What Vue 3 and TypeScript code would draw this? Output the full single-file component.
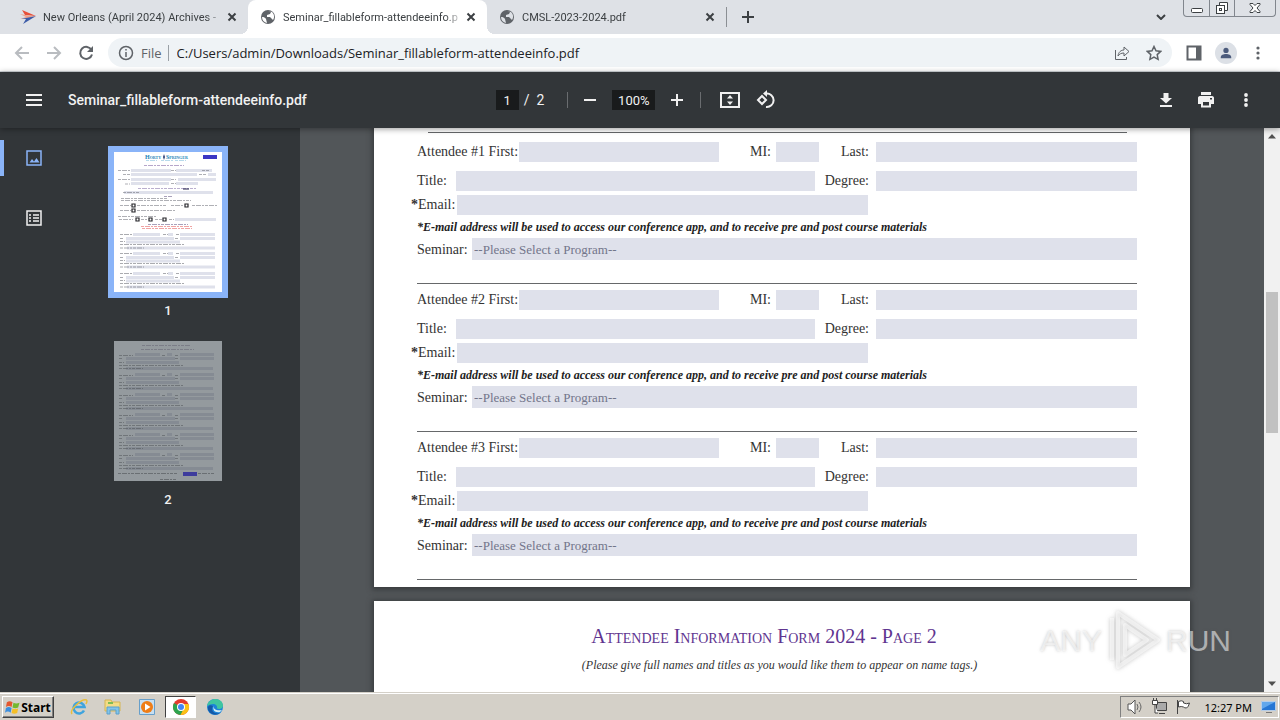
<script setup lang="ts">
import { ref } from 'vue'

interface Attendee {
  id: number
  first: string
  mi: string
  last: string
  title: string
  degree: string
  email: string
}

const attendees = ref<Attendee[]>(
  [1, 2, 3].map((id) => ({ id, first: '', mi: '', last: '', title: '', degree: '', email: '' })),
)

const pageNumber = ref('1')
const zoom = ref('100%')
const address = ref('C:/Users/admin/Downloads/Seminar_fillableform-attendeeinfo.pdf')

const firstThumbBlocks = [82, 101, 121]
const secondThumbBlocks = [12, 32, 52, 72, 92, 112]
</script>

<template>
  <div class="screen">
    <header class="tabs">
      <div class="tab tab-first">
        <svg class="fav" viewBox="0 0 16 16"><path d="M2 1l14 6-11-1z" fill="#e8503a" /><path d="M0 5l16 3-16 2 6-2z" fill="#f0a08a" /><path d="M1 10l15-3-13 8 3-5z" fill="#3c5ca8" /></svg>
        <span class="tab-name">New Orleans (April 2024) Archives -</span>
        <button class="x" aria-label="Close tab"><svg viewBox="0 0 10 10"><path d="M1.500 1.500l7 7M8.500 1.500l-7 7" /></svg></button>
      </div>
      <div class="tab active">
        <svg class="fav" viewBox="0 0 16 16"><circle cx="8" cy="8" r="7" fill="#5f6368" /><path d="M2 8c2 0 3 .5 4 2l1 4C4 13.500 2 11 2 8zM8 2l3 1-1 2-3 1v2h3l2 2 1 1c2-3 1-6-1-8" fill="#fff" /></svg>
        <span class="tab-name">Seminar_fillableform-attendeeinfo.p</span>
        <button class="x" aria-label="Close tab"><svg viewBox="0 0 10 10"><path d="M1.500 1.500l7 7M8.500 1.500l-7 7" /></svg></button>
      </div>
      <div class="tab">
        <svg class="fav" viewBox="0 0 16 16"><circle cx="8" cy="8" r="7" fill="#5f6368" /><path d="M2 8c2 0 3 .5 4 2l1 4C4 13.500 2 11 2 8zM8 2l3 1-1 2-3 1v2h3l2 2 1 1c2-3 1-6-1-8" fill="#dee1e6" /></svg>
        <span class="tab-name">CMSL-2023-2024.pdf</span>
        <button class="x" aria-label="Close tab"><svg viewBox="0 0 10 10"><path d="M1.500 1.500l7 7M8.500 1.500l-7 7" /></svg></button>
      </div>
      <i class="tab-sep"></i>
      <button class="new-tab" aria-label="New tab"><svg viewBox="0 0 12 12"><path d="M6 0v12M0 6h12" /></svg></button>
      <button class="tab-search" aria-label="Search tabs"><svg viewBox="0 0 10 6"><path d="M1 1l4 4 4-4" /></svg></button>
      <div class="win">
        <button aria-label="Minimize"><svg viewBox="0 0 24 16"><rect x="6.500" y="8.500" width="11" height="4" rx="1" /></svg></button>
        <button aria-label="Restore"><svg viewBox="0 0 24 16"><path d="M9.500 5V2.500h8v8H15" /><rect x="6.500" y="5.500" width="8" height="8" /><rect x="9.500" y="8.500" width="2" height="2" /></svg></button>
        <button class="wide" aria-label="Close window"><svg viewBox="0 0 24 16"><path d="M7 3.500h3l2 2 2-2h3v1l-3 3.500 3 3.500v1h-3l-2-2-2 2H7v-1L10 8 7 4.500z" /></svg></button>
      </div>
    </header>

    <nav class="toolbar">
      <button class="nav dim" aria-label="Back"><svg viewBox="0 0 16 16"><path d="M15 8H2M8 2L2 8l6 6" /></svg></button>
      <button class="nav dim" aria-label="Forward"><svg viewBox="0 0 16 16"><path d="M1 8h13M8 2l6 6-6 6" /></svg></button>
      <button class="nav" aria-label="Reload"><svg viewBox="0 0 16 16"><path d="M13.500 5A6 6 0 1 0 14 9.500" /><path d="M15 1v6H9z" class="solid" /></svg></button>
      <div class="omnibox">
        <svg class="info" viewBox="0 0 16 16"><circle cx="8" cy="8" r="6.500" /><path d="M8 7v5M8 4v1.500" /></svg>
        <label for="url">File</label>
        <i class="omni-sep"></i>
        <input id="url" v-model="address" type="text" />
        <button aria-label="Share"><svg viewBox="0 0 16 16"><path d="M1.500 5v9.500h11V12M4 11c.5-4 3-6 6-6V2l5 4.500-5 4.500V8c-3 0-4.500 1-6 3z" class="thin" /></svg></button>
        <button aria-label="Bookmark"><svg viewBox="0 0 16 16"><path d="M8 1.500l2 4.300 4.700.6-3.500 3.200.9 4.700L8 12l-4.100 2.300.9-4.700L1.300 6.400 6 5.800z" /></svg></button>
      </div>
      <button class="side-panel" aria-label="Side panel"><svg viewBox="0 0 16 16"><path d="M1.500 1.500h13v13h-13z" /><path d="M10 1h5v14h-5z" class="solid" /></svg></button>
      <button class="avatar" aria-label="Profile"><svg viewBox="0 0 16 16"><circle cx="8" cy="5" r="3" class="solid" /><path d="M2 14v-1c0-3 3-4 6-4s6 1 6 4v1z" class="solid" /></svg></button>
      <button class="nav more" aria-label="Menu"><svg viewBox="0 0 16 16"><g class="solid"><circle cx="8" cy="3" r="1.600" /><circle cx="8" cy="8" r="1.600" /><circle cx="8" cy="13" r="1.600" /></g></svg></button>
    </nav>

    <section class="pdf-bar">
      <div class="pdf-left">
        <button aria-label="Toggle sidebar"><svg viewBox="0 0 16 16"><path d="M0 3h16M0 8h16M0 13h16" /></svg></button>
        <h1>Seminar_fillableform-attendeeinfo.pdf</h1>
      </div>
      <div class="pdf-mid">
        <input v-model="pageNumber" class="page-no" aria-label="Page number" />
        <span class="slash">/</span><span>2</span>
        <i class="bar-sep sep-a"></i>
        <button aria-label="Zoom out"><svg viewBox="0 0 16 16"><path d="M2 8h12" /></svg></button>
        <input v-model="zoom" class="zoom" aria-label="Zoom level" />
        <button aria-label="Zoom in" class="zoom-in"><svg viewBox="0 0 16 16"><path d="M2 8h12M8 2v12" /></svg></button>
        <i class="bar-sep sep-b"></i>
        <button aria-label="Fit to page"><svg class="big" viewBox="0 0 20 20"><path d="M1 3h18v14H1z" /><path d="M10 5l3 3.500H7zM10 15l3-3.500H7z" class="solid" /></svg></button>
        <button aria-label="Rotate"><svg class="big" viewBox="0 0 20 20"><path d="M6 6l4 4-4 4-4-4z" /><path d="M10 3.500a6.800 6.800 0 1 1 0 13.500" /><path d="M11 0v7L7 3.500z" class="solid" /></svg></button>
      </div>
      <div class="pdf-right">
        <button aria-label="Download"><svg viewBox="0 0 16 16"><path d="M5.500 1h5v5H14L8 11.500 2 6h3.500zM2 13h12v2H2z" class="solid" /></svg></button>
        <button aria-label="Print"><svg viewBox="0 0 16 16"><path d="M3 0h10v3H3zM2 4h12c1.500 0 2 1 2 2v6h-3v3.500H3V12H0V6c0-1 .5-2 2-2zm3 6v3.500h6V10zM12 6v1.500h2V6z" fill-rule="evenodd" class="solid" /></svg></button>
        <button aria-label="More actions"><svg viewBox="0 0 16 16"><g class="solid"><circle cx="8" cy="3" r="1.900" /><circle cx="8" cy="8" r="1.900" /><circle cx="8" cy="13" r="1.900" /></g></svg></button>
      </div>
    </section>

    <main class="viewer">
      <aside class="side">
        <div class="modes">
          <button class="on" aria-label="Thumbnails"><svg viewBox="0 0 16 16"><path d="M1 1h14v14H1z" /><path d="M3.500 12.500L6 9l2 2.500L10.500 8l3 4.500z" class="solid" /></svg></button>
          <button aria-label="Outline"><svg viewBox="0 0 16 16"><path d="M1 1h14v14H1zM3 5h2M7 5h6M3 8h2M7 8h6M3 11h2M7 11h6" /></svg></button>
        </div>
        <div class="thumbs">
          <button class="thumb selected" aria-label="Page 1">
            <svg viewBox="0 0 108 140">
              <path d="M0 0h108v140H0z" fill="#fff" />
              <text x="31" y="7" class="brand" fill="#2286b8">Horty</text>
              <path d="M50 2l1 3-1 3-1-3z" fill="#2d3f77" />
              <text x="52" y="7" class="brand" fill="#2286b8">Springer</text>
              <path d="M32 8.500h11M47 8.500h12M61 8.500h11" class="ln" stroke="#6fb6d8" />
              <path d="M89 3h14v4H89z" fill="#3b36c4" />
              <path d="M30 13.500h40" class="ln" stroke="#6e4d96" />
              <g fill="#dfe1eb"><path d="M17 17h40v3H17zM62 17h36v3H62zM17 21h66v3H17zM94 21h8v3h-8zM17 26h40v3H17zM64 26h38v3H64zM17 30h38v3H17zM62 30h22v3H62zM10 39h89v3H10zM61 66h41v3H61z" /></g>
              <path d="M4 18.500h12M57 18.500h5M88 18.500h7M9 22.500h7M85 22.500h7M4 27.500h12M57 27.500h5M11 32h5M57 31.500h5M9 40.500h17M7 46.500h46M7 48.500h70M6 53.500h11M23 53.500h30M57 53.500h13M78 53.500h26M6 58.500h11M23 58.500h39M4 64.500h39M5 67.500h14M27 67.500h6M41 67.500h7M55 67.500h5" class="ln" stroke="#60626b" />
              <path d="M24 36.500h58" class="ln" stroke="#755fa0" /><path d="M69 37h6" stroke="#22204a" /><path d="M50 44.500h8M34 72.500h40" class="ln" stroke="#544478" />
              <path d="M27 74.500h52M28 76.500h50" class="ln" stroke="#e24a4a" />
              <g fill="none" stroke="#26262b" stroke-width="1.200"><path d="M18 52h3v3h-3zM71 52h3v3h-3zM18 57h3v3h-3zM22 66h3v3h-3zM35 66h3v3h-3zM49 66h3v3h-3z" /></g>
              <g v-for="y in firstThumbBlocks" :key="y" :transform="`translate(0 ${y})`">
                <path d="M19 -1h27v3H19zM54 -1h5v3h-5zM66 -1h35v3H66zM12 3h48v3H12zM66 3h35v3H66zM12 6.500h54v3H12zM13 12.500h88v3H13z" fill="#dfe1eb" />
                <path d="M6 .5h12M49 .5h5M62 .5h3M6 4.500h4M61 4.500h4M6 7.500h5M6 10.500h65M6 14h24" class="ln" stroke="#55575f" />
              </g>
            </svg>
          </button>
          <span class="thumb-no">1</span>
          <button class="thumb" aria-label="Page 2">
            <svg viewBox="0 0 108 140">
              <path d="M0 0h108v140H0z" fill="#949a9e" />
              <path d="M28 4.500h48M27 8.500h53" class="ln" stroke="#62606f" />
              <g v-for="y in secondThumbBlocks" :key="y" :transform="`translate(0 ${y})`">
                <path d="M21 0h25v3H21zM53 0h5v3h-5zM66 0h34v3H66zM12 4h49v3H12zM66 4h34v3H66zM12 8h53v3H12zM12 14h87v3H12z" fill="#858b93" />
                <path d="M5 2.500h14M48 2.500h4M61 2.500h3M5 5.500h4M61 5.500h4M5 9.500h5M5 12.500h65M5 15.500h24" class="ln" stroke="#4c5054" />
              </g>
              <path d="M4 132.500h59M84 132.500h17M46 138.500h16" class="ln" stroke="#404448" /><path d="M69 131h14v4H69z" fill="#3e3c9d" />
            </svg>
          </button>
          <span class="thumb-no">2</span>
        </div>
      </aside>

      <div class="canvas">
        <article class="sheet sheet-one">
          <hr class="top-rule" />
          <form v-for="a in attendees" :key="a.id" class="attendee">
            <div class="row names">
              <label :for="`first${a.id}`">Attendee #{{ a.id }} First:</label><input :id="`first${a.id}`" v-model="a.first" />
              <label class="right" :for="`mi${a.id}`">MI:</label><input :id="`mi${a.id}`" v-model="a.mi" />
              <label class="right wide-gap" :for="`last${a.id}`">Last:</label><input :id="`last${a.id}`" v-model="a.last" />
            </div>
            <div class="row titles">
              <label :for="`title${a.id}`">Title:</label><input :id="`title${a.id}`" v-model="a.title" />
              <label class="right wide-gap" :for="`degree${a.id}`">Degree:</label><input :id="`degree${a.id}`" v-model="a.degree" />
            </div>
            <div class="row emails">
              <label :for="`email${a.id}`"><b>*</b>Email:</label><input :id="`email${a.id}`" v-model="a.email" />
            </div>
            <p class="note">*E-mail address will be used to access our conference app, and to receive pre and post course materials</p>
            <div class="row seminars">
              <label :for="`seminar${a.id}`">Seminar:</label>
              <select :id="`seminar${a.id}`"><option>--Please Select a Program--</option></select>
            </div>
            <hr />
          </form>
        </article>
        <article class="sheet sheet-two">
          <h2>Attendee Information Form 2024 - Page 2</h2>
          <p>(Please give full names and titles as you would like them to appear on name tags.)</p>
        </article>
      </div>

      <div class="scroll">
        <svg viewBox="0 0 16 16"><path d="M4 10.500l4-4.500 4 4.500z" /></svg>
        <i class="before"></i><i class="grip"></i><i class="after"></i>
        <svg viewBox="0 0 16 16"><path d="M4 5.500L8 10l4-4.500z" /></svg>
      </div>

      <div class="mark">
        <span>ANY</span>
        <svg viewBox="0 0 60 66"><path d="M14 5l40 27-40 27z" /><path d="M21 17l22 15-22 15z" /><path d="M8 10v42" /></svg>
        <span>RUN</span>
      </div>
    </main>

    <footer class="taskbar">
      <button class="start">
        <svg viewBox="0 0 16 16"><path d="M2 3c2-1.500 4-1.500 6 0L7 8C5 6.500 3 6.500 1 8z" fill="#e4572e" /><path d="M9 3.500c2 1 4 1 6.500 0L14 8.500c-2 1-4 1-6 0z" fill="#74b82e" /><path d="M1 9c2-1.500 4-1.500 6 0l-1 5c-2-1.500-4-1.500-6 0z" fill="#3b8ede" /><path d="M8 9.500c2 1 4 1 6 0l-1 5c-2 1-4 1-6 0z" fill="#f5bf27" /></svg>
        Start
      </button>
      <div class="apps">
        <button aria-label="Internet Explorer"><svg viewBox="0 0 18 18"><path d="M14 12.500A5.500 5.500 0 1 1 14.500 9H5" fill="none" stroke="#3fa4de" stroke-width="2.600" /><path d="M2 16C-1 12 12 0 16.500 2c1 .7 0 3-.5 4" fill="none" stroke="#e9be3b" stroke-width="1.500" /></svg></button>
        <button aria-label="File Explorer"><svg viewBox="0 0 18 18"><path d="M1 2h6l1 2h8v9H1z" fill="#f3dc86" stroke="#d6b552" /><path d="M4 4h5v2H4z" fill="#7ebd55" /><path d="M3 9h12v7h-3v-4H6v4H3z" fill="#82c4ea" stroke="#5aa0cc" /></svg></button>
        <button aria-label="Media Player"><svg viewBox="0 0 18 18"><path d="M1.500 1.500h15v15h-15z" fill="#c7dff1" stroke="#679fca" /><circle cx="9" cy="9" r="6" fill="#ef7d16" /><path d="M7 5.500L12.500 9 7 12.500z" fill="#fff" /></svg></button>
        <button class="running" aria-label="Chrome"><svg viewBox="0 0 18 18"><circle cx="9" cy="9" r="8" fill="#e33b2e" /><path d="M2 5a8 8 0 0 0 6.500 12L12 11 9 9z" fill="#2da44e" /><path d="M16.500 6a8 8 0 0 1-8 11L12 10 9 6z" fill="#fbc116" /><circle cx="9" cy="9" r="4" fill="#fff" /><circle cx="9" cy="9" r="3" fill="#4285f4" /></svg></button>
        <button aria-label="Edge"><svg viewBox="0 0 18 18"><circle cx="9" cy="9" r="8" fill="#1c83d8" /><path d="M1 8C2 3 6 1 9.500 1 14 1 17 4 17 7.500c0 3-3 4-6 3 1-5-5-6-10-2.500z" fill="#3fc5a0" /><path d="M7 8c-3 4 1 9 7 7-5 4-13 0-12-6 1-2 3-2 5-1z" fill="#1559a6" /><path d="M8 8c-1 4 4 5 8 4l-2 2c-5 1-8-2-6-6z" fill="#d6eef5" /></svg></button>
      </div>
      <div class="tray">
        <svg viewBox="0 0 18 18"><path d="M2 6h3l4-4v14l-4-4H2z" fill="#fff" stroke="#555" /><path d="M11 6q2 3 0 6M13 4q4 5 0 10" fill="none" stroke="#666" /></svg>
        <svg class="net" viewBox="0 0 18 18"><path d="M6.500 4.500h10v8h-10zM9 15.500h6" fill="#aaa" stroke="#444" /><path d="M2.500 2.500h5v4h-5zM5 7v8h3" fill="#fff" stroke="#444" /><path d="M3.500 0v2M6.500 0v2" stroke="#444" /></svg>
        <svg viewBox="0 0 18 18"><path d="M3.500 2v14M4.500 3.500q3-1.500 5 0v1.500q3 1.500 6 0-1 4-3 5-2 0-3-1-2-1-5 0z" fill="#fff" stroke="#444" /></svg>
        <time>12:27 PM</time>
        <svg class="desk" viewBox="0 0 18 18"><path d="M1.500 3.500h14v9h-14z" fill="#2676d4" stroke="#b5cde8" /><path d="M2 4h13L2 11z" fill="#61a7ec" /><path d="M6 14.500h6" stroke="#777" /></svg>
      </div>
    </footer>
  </div>
</template>

<style>
html,
body {
  height: 100%;
}
body {
  margin: 0;
  overflow: hidden;
}
#app {
  height: 100%;
}
</style>

<style scoped>
* {
  box-sizing: border-box;
}
.screen {
  display: flex;
  flex-direction: column;
  height: 100%;
  min-height: 480px;
  font-family: "Noto Sans", "Open Sans", sans-serif;
  font-size: 12px;
  color: #3c4043;
}
button {
  display: flex;
  align-items: center;
  justify-content: center;
  flex: none;
  padding: 0;
  border: 0;
  background: none;
  color: inherit;
  font: inherit;
}
input,
select {
  min-width: 0;
  padding: 0;
  border: 0;
  border-radius: 0;
  outline: 0;
  font: inherit;
  color: inherit;
}
svg {
  display: block;
  flex: none;
  width: 16px;
  height: 16px;
  fill: none;
  stroke: currentColor;
  stroke-width: 2;
}
svg [fill]:not([stroke]) {
  stroke: none;
}
.solid {
  fill: currentColor;
  stroke: none;
}
.thin {
  stroke-width: 1;
}

.tabs {
  display: flex;
  flex: none;
  height: 34px;
  background: #dee1e6;
}
.tab {
  display: flex;
  align-items: center;
  width: 239px;
  padding: 0 8px 0 12px;
}
.tab-first {
  width: 248px;
  padding-left: 20px;
}
.tab.active {
  position: relative;
  border-radius: 8px 8px 0 0;
  background: #fff;
}
.tab.active::before,
.tab.active::after {
  content: "";
  position: absolute;
  bottom: 0;
  width: 8px;
  height: 8px;
}
.tab.active::before {
  right: 100%;
  background: radial-gradient(circle at 0 0, transparent 8px, #fff 8px);
}
.tab.active::after {
  left: 100%;
  background: radial-gradient(circle at 100% 0, transparent 8px, #fff 8px);
}
.tab-name {
  flex: 1;
  min-width: 0;
  margin: 0 0 0 7px;
  font-family: Roboto, sans-serif;
  font-size: 11px;
  white-space: nowrap;
  mask-image: linear-gradient(90deg, #000 90%, transparent);
}
.x {
  width: 16px;
  height: 16px;
}
.x svg {
  width: 10px;
  height: 10px;
}
.tab-sep {
  align-self: center;
  width: 1px;
  height: 20px;
  background: #8b8f94;
}
.new-tab {
  width: 42px;
}
.new-tab svg {
  width: 12px;
  height: 12px;
}
.tab-search {
  width: 28px;
  margin-left: auto;
}
.tab-search svg {
  width: 10px;
  height: 6px;
}
.win {
  display: flex;
  height: 17px;
  margin: 0 4px 0 8px;
  border: 1px solid #81868d;
  border-top: 0;
  border-radius: 0 0 4px 4px;
}
.win button {
  width: 25px;
}
.win button + button {
  border-left: 1px solid #81868d;
}
.win .wide {
  width: 41px;
}
.win svg {
  width: 24px;
  stroke-width: 1;
  fill: #fff;
}

.toolbar {
  display: flex;
  flex: none;
  align-items: center;
  height: 38px;
  padding: 0 6px;
  border-bottom: 1px solid #d5d9dd;
  background: #fff;
  color: #5f6368;
}
.nav {
  width: 32px;
}
.dim {
  color: #b9bcc0;
}
.omnibox {
  display: flex;
  flex: 1;
  align-items: center;
  height: 29px;
  margin: 0 6px;
  padding: 0 2px 0 10px;
  border-radius: 15px;
  background: #eff3f6;
  font-family: "Open Sans", "Noto Sans", sans-serif;
  font-size: 13px;
}
.info {
  stroke-width: 1.5;
}
.omnibox label {
  margin-left: 7px;
}
.omni-sep {
  width: 1px;
  height: 16px;
  margin: 0 8px 0 6px;
  background: #9aa0a6;
}
.omnibox input {
  flex: 1;
  background: transparent;
  color: #202124;
}
.omnibox button {
  width: 32px;
}
.omnibox button svg {
  stroke-width: 1.5;
}
.side-panel {
  width: 32px;
}
.avatar {
  width: 22px;
  height: 22px;
  margin: 0 5px;
  border-radius: 50%;
  background: #dce0e6;
  color: #4c5b7c;
}
.avatar svg {
  width: 14px;
}

.pdf-bar {
  position: relative;
  z-index: 1;
  display: grid;
  grid-template-columns: 1fr auto 1fr;
  flex: none;
  align-items: center;
  height: 56px;
  padding: 0 18px;
  background: #323639;
  box-shadow: 0 1px 6px rgba(0, 0, 0, 0.4);
  color: #f1f1f1;
  font-family: Roboto, sans-serif;
  font-size: 14px;
}
.pdf-left,
.pdf-mid,
.pdf-right {
  display: flex;
  align-items: center;
}
.pdf-bar button {
  width: 32px;
  height: 32px;
}
.pdf-bar h1 {
  margin: 0 0 0 18px;
  font-size: 14px;
  font-weight: 500;
}
.pdf-bar input {
  height: 20px;
  background: #191b1c;
  font-size: 13px;
  text-align: center;
}
.pdf-mid {
  margin-right: 2px;
}
.pdf-bar .page-no {
  width: 23px;
}
.pdf-bar .zoom {
  width: 43px;
  margin: 0 6px;
}
.slash {
  margin: 0 7px 0 5px;
}
.bar-sep {
  width: 1px;
  height: 16px;
  background: #6a6d70;
}
.sep-a {
  margin: 0 6px 0 23px;
}
.sep-b {
  margin: 0 13px 0 7px;
}
.pdf-mid button + button {
  margin-left: 4px;
}
.big {
  width: 20px;
  height: 20px;
}
.pdf-right {
  justify-content: flex-end;
  gap: 8px;
}

.viewer {
  position: relative;
  display: flex;
  flex: 1;
  min-height: 0;
  background: #525659;
}
.side {
  display: flex;
  flex: none;
  width: 300px;
  background: #323639;
  color: #f1f1f1;
}
.modes {
  display: flex;
  flex-direction: column;
  gap: 24px;
  width: 68px;
  padding-top: 12px;
}
.modes button {
  width: 68px;
  height: 36px;
}
.modes .on {
  padding-right: 4px;
  border-left: 4px solid #8ab4f8;
  color: #8ab4f8;
}
.modes svg {
  stroke-width: 1.5;
}
.thumbs {
  display: flex;
  flex-direction: column;
  align-items: center;
  width: 200px;
  padding-top: 18px;
}
.thumb {
  border: 6px solid transparent;
}
.thumb.selected {
  border-color: #8ab4f8;
}
.thumb svg {
  width: 108px;
  height: 140px;
  stroke-width: 1;
}
.ln {
  stroke-width: 1;
  stroke-dasharray: 3 1 5 1 2 1;
  opacity: 0.5;
}
.brand {
  font: bold 6px "Liberation Serif", serif;
  font-variant: small-caps;
}
.thumb-no {
  height: 37px;
  font: 500 13px/26px Roboto, sans-serif;
}

.canvas {
  display: flex;
  flex: 1;
  flex-direction: column;
  align-items: center;
  gap: 14px;
  min-width: 0;
  overflow: hidden;
  color: #333;
  font-family: "Liberation Serif", serif;
  font-size: 14px;
}
.sheet {
  flex: none;
  width: 100%;
  max-width: 816px;
  background: #fff;
  box-shadow: 0 1px 5px 2px #3a3d3f;
}
.sheet-one {
  padding: 4px 53px 7px 43px;
}
.sheet hr {
  height: 1px;
  margin: 0;
  border: 0;
  background: #66686a;
}
.sheet .top-rule {
  margin: 0 10px 3px 11px;
}
.attendee {
  padding-top: 6px;
}
.row {
  display: grid;
  align-items: center;
}
.row label {
  line-height: 20px;
  white-space: nowrap;
}
.row input {
  width: 100%;
  height: 20px;
  background: #dfe1eb;
}
.names {
  grid-template-columns: 102px 200px 57px 43px 57px 1fr;
  margin-bottom: 9px;
}
.titles {
  grid-template-columns: 39px 359px 61px 1fr;
  margin-bottom: 4px;
}
.emails {
  grid-template-columns: 46px 411px;
  margin-left: -6px;
}
.right {
  padding-right: 5px;
  text-align: right;
}
.wide-gap {
  padding-right: 7px;
}
.note {
  margin: 0;
  font-size: 12px;
  font-style: italic;
  font-weight: bold;
  line-height: 24px;
  white-space: nowrap;
  color: #222;
}
.seminars {
  grid-template-columns: 55px 1fr;
  align-items: end;
  margin: -1px 0 23px;
}
.row select {
  width: 100%;
  height: 22px;
  padding: 0 2px;
  appearance: none;
  background: #dfe1eb;
  color: #72758a;
  font-size: 13px;
}
.sheet-two {
  flex: 1 0 91px;
  padding-top: 23px;
  text-align: center;
}
.sheet-two h2 {
  margin: 0 36px 6px 0;
  color: #5f3590;
  font-size: 20px;
  font-variant: small-caps;
  font-weight: normal;
  line-height: 24px;
}
.sheet-two p {
  margin: 0;
  padding-right: 5px;
  font-size: 12px;
  font-style: italic;
  line-height: 22px;
}

.scroll {
  display: flex;
  flex: none;
  flex-direction: column;
  width: 16px;
  background: #f1f1f1;
  color: #505050;
}
.scroll svg {
  fill: currentColor;
  stroke: none;
}
.before {
  flex: 148;
}
.grip {
  flex: 140;
  margin: 0 2px;
  background: #c1c1c1;
}
.after {
  flex: 243;
}
.mark {
  position: absolute;
  right: 49px;
  bottom: 18px;
  display: flex;
  align-items: center;
  gap: 2px;
  color: rgba(255, 255, 255, 0.55);
  font: 30px/66px "Liberation Sans", sans-serif;
  text-shadow: 0 0 3px rgba(90, 90, 90, 0.35);
  pointer-events: none;
}
.mark svg {
  width: 60px;
  height: 66px;
  stroke-width: 4;
  stroke-linejoin: round;
  filter: drop-shadow(0 0 2px rgba(90, 90, 90, 0.6));
}

.taskbar {
  display: flex;
  flex: none;
  align-items: center;
  height: 28px;
  padding: 1px 1px 0 2px;
  border-top: 1px solid #d4d0c8;
  background: #d4d0c8;
  box-shadow: inset 0 1px #fff;
  color: #000;
}
.start {
  gap: 1px;
  width: 52px;
  height: 22px;
  border: 1px solid;
  border-color: #fff #404040 #404040 #fff;
  box-shadow: inset -1px -1px #808080;
  font-size: 12px;
  font-weight: bold;
}
.start svg {
  width: 15px;
}
.apps {
  display: flex;
  gap: 3px;
  margin-left: 9px;
}
.apps button {
  width: 31px;
  height: 22px;
}
.apps svg,
.tray svg {
  width: 18px;
  height: 18px;
  stroke-width: 1;
}
.apps .running {
  border: 1px solid;
  border-color: #404040 #fff #fff #404040;
  background: #fff;
}
.tray {
  display: flex;
  align-items: center;
  gap: 6px;
  height: 22px;
  margin-left: auto;
  padding: 0 0 0 5px;
  border: 1px solid;
  border-color: #808080 #fff #fff #808080;
}
.tray time {
  margin: 0 2px 0 6px;
  font-size: 11px;
  white-space: nowrap;
}
</style>
